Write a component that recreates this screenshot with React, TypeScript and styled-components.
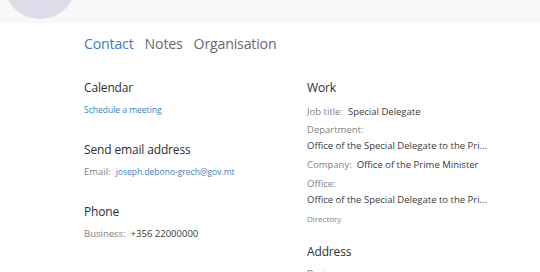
import React from "react";
import styled, { createGlobalStyle } from "styled-components";

const Global = createGlobalStyle`
  html, body { margin: 0; padding: 0; background: #fff; }
  body { font-family: "Open Sans", "Noto Sans", sans-serif; overflow: hidden; }
`;

const Page = styled.div`
  width: 540px;
  height: 272px;
  overflow: hidden;
  display: flex;
  flex-direction: column;
`;

const Header = styled.div`
  height: 23px;
  flex: none;
  background: #f8f8f8;
  position: relative;
  overflow: hidden;
`;

const Avatar = styled.div`
  position: absolute;
  left: 4px;
  top: -53px;
  width: 72px;
  height: 72px;
  border-radius: 50%;
  background: #dedbeb;
`;

const Body = styled.div`
  padding: 4px 0 0 84px;
`;

const Tabs = styled.div`
  display: flex;
  gap: 11px;
  height: 32px;
  align-items: center;
`;

const Tab = styled.div<{ $active?: boolean }>`
  font-size: 14.2px;
  color: ${(p) => (p.$active ? "#3a7fc2" : "#6a6a6a")};
  letter-spacing: -0.2px;
`;

const Columns = styled.div`
  display: grid;
  grid-template-columns: 223px 223px;
  margin-top: 18px;
`;

const Column = styled.div`
  display: flex;
  flex-direction: column;
`;

const Section = styled.div<{ $after?: number }>`
  display: flex;
  flex-direction: column;
  margin-bottom: ${(p) => p.$after ?? 19}px;
`;

const SectionTitle = styled.div`
  font-size: 12px;
  letter-spacing: -0.15px;
  color: #2f2f2f;
  height: 22px;
  line-height: 22px;
  margin-bottom: 1px;
`;

const Link = styled.div`
  font-size: 8.5px;
  color: #3a7fc2;
  line-height: 20px;
`;

const Row = styled.div<{ $top?: number }>`
  font-size: 9.5px;
  line-height: 20px;
  color: #3a3a3a;
  white-space: nowrap;
  display: flex;
  gap: 5px;
  margin-top: ${(p) => p.$top ?? 0}px;
`;

const Label = styled.span`
  color: #7f7f7f;
`;

const Value = styled.span<{ $link?: boolean }>`
  color: ${(p) => (p.$link ? "#3a7fc2" : "#3a3a3a")};
  font-size: ${(p) => (p.$link ? "8.5px" : "inherit")};
`;

const Stack = styled.div<{ $top?: number }>`
  display: flex;
  flex-direction: column;
  font-size: 9.5px;
  color: #3a3a3a;
  line-height: 16px;
  margin-top: ${(p) => p.$top ?? 0}px;
  white-space: nowrap;
`;

const Small = styled.div`
  font-size: 8px;
  color: #7f7f7f;
  line-height: 18px;
  margin-top: 2px;
`;

export default function App() {
  return (
    <Page>
      <Global />
      <Header>
        <Avatar />
      </Header>
      <Body>
        <Tabs>
          <Tab $active>Contact</Tab>
          <Tab>Notes</Tab>
          <Tab>Organisation</Tab>
        </Tabs>
        <Columns>
          <Column>
            <Section>
              <SectionTitle>Calendar</SectionTitle>
              <Link>Schedule a meeting</Link>
            </Section>
            <Section>
              <SectionTitle>Send email address</SectionTitle>
              <Row>
                <Label>Email:</Label>
                <Value $link>joseph.debono-grech@gov.mt</Value>
              </Row>
            </Section>
            <Section>
              <SectionTitle>Phone</SectionTitle>
              <Row>
                <Label>Business:</Label>
                <Value>+356 22000000</Value>
              </Row>
            </Section>
          </Column>
          <Column>
            <Section $after={13}>
              <SectionTitle>Work</SectionTitle>
              <Row $top={2}>
                <Label>Job title:</Label>
                <Value>Special Delegate</Value>
              </Row>
              <Stack>
                <Label>Department:</Label>
                <span>Office of the Special Delegate to the Pri...</span>
              </Stack>
              <Row $top={1}>
                <Label>Company:</Label>
                <Value>Office of the Prime Minister</Value>
              </Row>
              <Stack $top={1}>
                <Label>Office:</Label>
                <span>Office of the Special Delegate to the Pri...</span>
              </Stack>
              <Small>Directory</Small>
            </Section>
            <Section>
              <SectionTitle>Address</SectionTitle>
              <Row>
                <Label>Business</Label>
              </Row>
            </Section>
          </Column>
        </Columns>
      </Body>
    </Page>
  );
}
